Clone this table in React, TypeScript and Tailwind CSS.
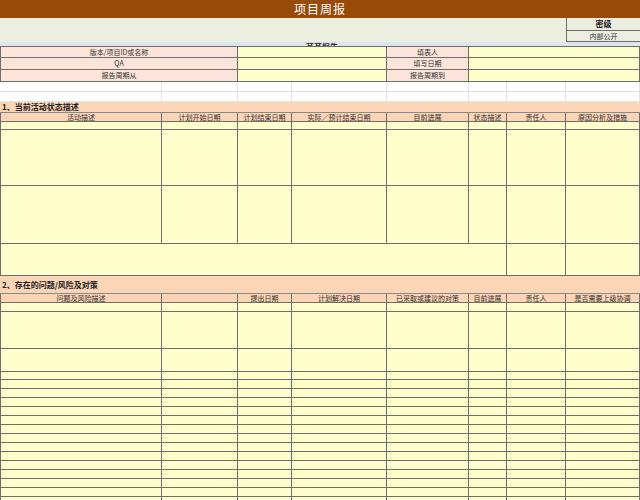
import React from 'react';

const grid = 'grid grid-cols-[162px_76px_54px_95px_82px_38px_59px_74px]';
const line = 'border-r border-b border-[#6e6e6e]';
const yellow = 'bg-[#ffffcc]';
const peach = 'bg-[#fbd5b5]';
const pink = 'bg-[#fce4d8]';

function Cell({ className = '', children }: { className?: string; children?: React.ReactNode }) {
  return (
    <div className={`${line} flex items-center justify-center overflow-hidden whitespace-nowrap text-[7px] leading-none text-[#333] ${className}`}>
      {children}
    </div>
  );
}

function BlankRow({ h }: { h: string }) {
  return (
    <div className={`${grid} ${h}`}>
      <Cell className={`${yellow} border-l`} />
      <Cell className={yellow} />
      <Cell className={yellow} />
      <Cell className={yellow} />
      <Cell className={yellow} />
      <Cell className={yellow} />
      <Cell className={yellow} />
      <Cell className={yellow} />
    </div>
  );
}

function HeadRow({ labels }: { labels: string[] }) {
  return (
    <div className={`${grid} h-[9px]`}>
      {labels.map((l, i) => (
        <Cell key={i} className={`${peach} ${i === 0 ? 'border-l' : ''}`}>
          {l}
        </Cell>
      ))}
    </div>
  );
}

function InfoRow({ left, right, h }: { left: string; right: string; h: string }) {
  return (
    <div className={`${grid} ${h}`}>
      <Cell className={`${pink} col-span-2 border-l`}>{left}</Cell>
      <Cell className={`${yellow} col-span-2`} />
      <Cell className={pink}>{right}</Cell>
      <Cell className={`${yellow} col-span-3`} />
    </div>
  );
}

function WhiteRow() {
  return (
    <div className={`${grid} h-[10px]`}>
      {[0, 1, 2, 3, 4, 5, 6, 7].map((i) => (
        <div key={i} className="border-r border-b border-[#e2e2e2] bg-white" />
      ))}
    </div>
  );
}

function SectionTitle({ text, h }: { text: string; h: string }) {
  return (
    <div className={`${h} ${peach} flex items-center pl-[2px] border-b border-[#8a8a8a]`}>
      <span className="text-[8px] font-bold leading-none text-[#222]">{text}</span>
    </div>
  );
}

export default function App() {
  const lowerRows = Array.from({ length: 14 });

  return (
    <div className="w-[640px] h-[500px] overflow-hidden bg-white font-['Noto_Sans_CJK_SC','Liberation_Sans',sans-serif]">
      <div className="h-[18px] bg-[#984a09] flex items-center justify-center">
        <span className="text-[12px] leading-none text-white tracking-[1px]">项目周报</span>
      </div>

      <div className="h-[24px] flex bg-[#ecefe0]">
        <div className="flex-1" />
        <div className="w-[74px] flex flex-col border-l border-[#6e6e6e]">
          <div className="h-[13px] border-b border-[#6e6e6e] flex items-center justify-center text-[8px] leading-none font-bold text-[#222]">
            密级
          </div>
          <div className="h-[11px] border-b border-[#6e6e6e] flex items-center justify-center text-[7px] leading-none text-[#333]">
            内部公开
          </div>
        </div>
      </div>

      <div className="h-[4px] bg-[#dde5ee] overflow-hidden flex justify-center">
        <span className="text-[8px] leading-[8px] font-bold text-[#333] pt-[1px] pl-[4px]">某某报告</span>
      </div>

      <div className="border-t border-[#6e6e6e]">
        <InfoRow left="版本/项目ID或名称" right="填表人" h="h-[11px]" />
        <InfoRow left="QA" right="填写日期" h="h-[12px]" />
        <InfoRow left="报告周期从" right="报告周期到" h="h-[12px]" />
      </div>

      <WhiteRow />
      <WhiteRow />

      <SectionTitle text="1、当前活动状态描述" h="h-[11px]" />
      <HeadRow labels={['活动描述', '计划开始日期', '计划结束日期', '实际／预计结束日期', '目前进展', '状态描述', '责任人', '原因分析及措施']} />
      <BlankRow h="h-[8px]" />
      <BlankRow h="h-[56px]" />
      <BlankRow h="h-[58px]" />
      <div className={`${grid} h-[32px]`}>
        <Cell className={`${yellow} col-span-6 border-l`} />
        <Cell className={yellow} />
        <Cell className={yellow} />
      </div>

      <SectionTitle text="2、存在的问题/风险及对策" h="h-[18px]" />
      <HeadRow labels={['问题及风险描述', '', '提出日期', '计划解决日期', '已采取或建议的对策', '目前进展', '责任人', '是否需要上级协调']} />
      <BlankRow h="h-[9px]" />
      <BlankRow h="h-[37px]" />
      <BlankRow h="h-[23px]" />
      <BlankRow h="h-[8px]" />
      {lowerRows.map((_, i) => (
        <BlankRow key={i} h="h-[9px]" />
      ))}
    </div>
  );
}
